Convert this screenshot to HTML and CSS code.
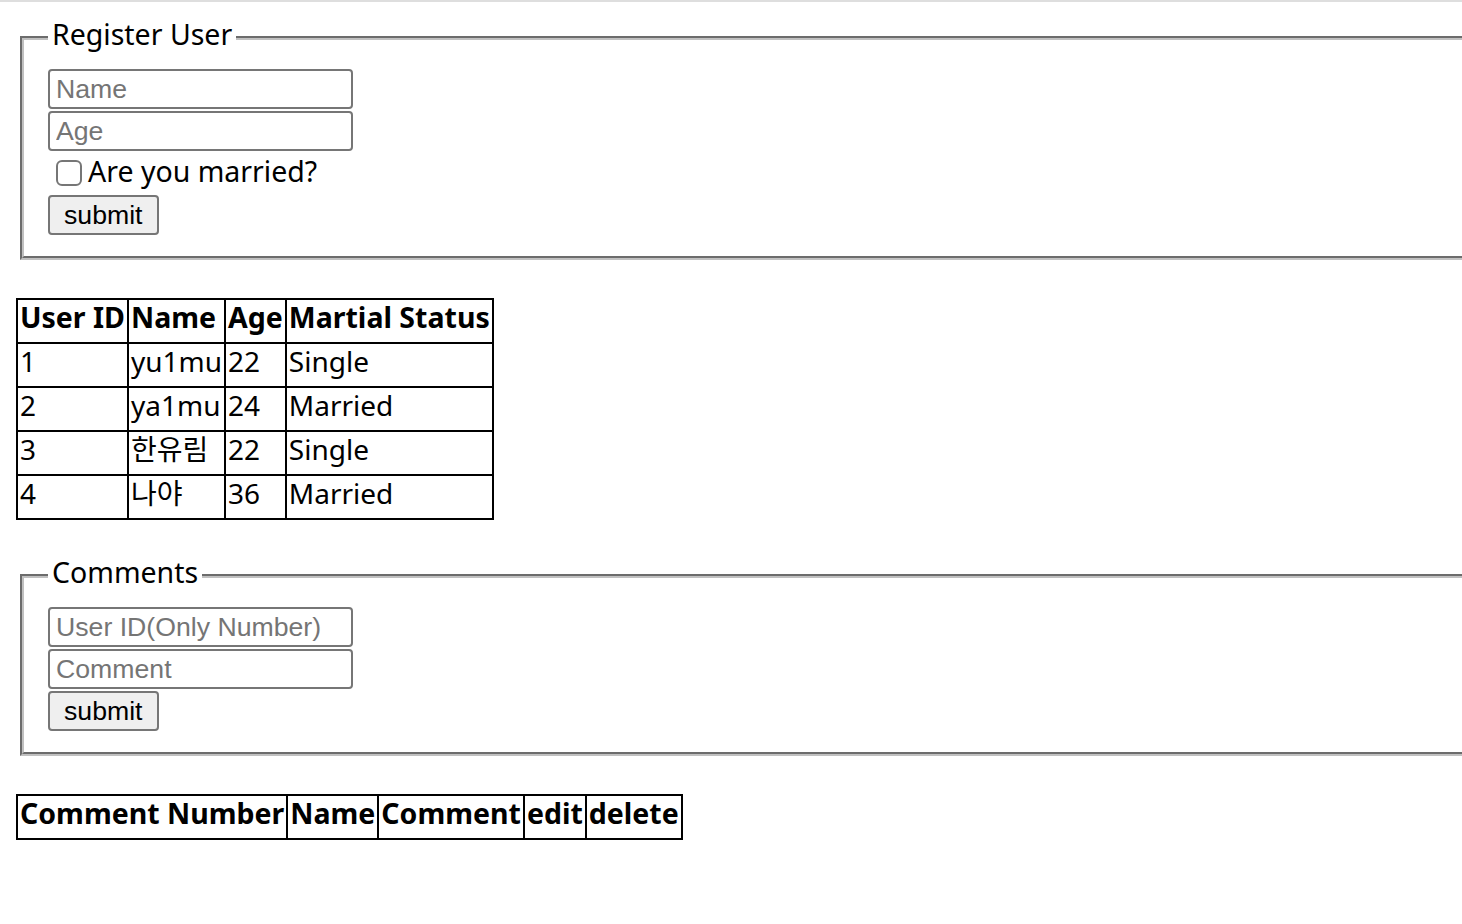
FILE: index.html
```html
<!DOCTYPE html>
<html lang="ko">
<head>
<meta charset="utf-8">
<title>Users</title>
<link rel="stylesheet" href="styles.css">
</head>
<body>
<form class="panel" id="user-form">
  <fieldset class="box">
    <legend class="box-title">Register User</legend>
    <div class="box-body">
      <input class="field" type="text" placeholder="Name">
      <input class="field field-next" type="text" placeholder="Age">
      <label class="check-row"><input class="check" type="checkbox"><span class="check-text">Are you married?</span></label>
      <button class="btn" type="submit">submit</button>
    </div>
  </fieldset>
</form>

<table class="grid grid-users">
  <thead>
    <tr><th>User ID</th><th>Name</th><th>Age</th><th>Martial Status</th></tr>
  </thead>
  <tbody>
    <tr><td>1</td><td>yu1mu</td><td>22</td><td>Single</td></tr>
    <tr><td>2</td><td>ya1mu</td><td>24</td><td>Married</td></tr>
    <tr><td>3</td><td>한유림</td><td>22</td><td>Single</td></tr>
    <tr><td>4</td><td>나야</td><td>36</td><td>Married</td></tr>
  </tbody>
</table>

<form class="panel panel-comments" id="comment-form">
  <fieldset class="box">
    <legend class="box-title">Comments</legend>
    <div class="box-body">
      <input class="field" type="text" placeholder="User ID(Only Number)">
      <input class="field field-next" type="text" placeholder="Comment">
      <button class="btn btn-comment" type="submit">submit</button>
    </div>
  </fieldset>
</form>

<table class="grid grid-comments">
  <thead>
    <tr><th>Comment Number</th><th>Name</th><th>Comment</th><th>edit</th><th>delete</th></tr>
  </thead>
  <tbody></tbody>
</table>
</body>
</html>
```

FILE: styles.css
```css
html {
  overflow: hidden;
  margin: 0;
}

body {
  margin: 0;
  padding: 17px 16px 16px;
  border-top: 2px solid #dedede;
  font-family: "Noto Sans", "Noto Sans CJK KR", sans-serif;
  font-size: 28.5px;
  line-height: 38px;
  color: #000;
  background: #fff;
}

.panel {
  margin: 0;
}

.panel-comments {
  margin-top: 37px;
}

.box {
  margin: 0 -200px 0 4px;
  padding: 0 24px 21px;
  border: 4px groove rgb(192, 192, 192);
}

.box-title {
  padding: 0 4px 8px;
  line-height: 30px;
}

.box-body {
  display: flex;
  flex-direction: column;
  align-items: flex-start;
  padding-top: 12px;
}

.field {
  box-sizing: border-box;
  width: 305px;
  height: 40px;
  margin: 0;
  padding: 2px 6px;
  border: 2px solid #767676;
  border-radius: 4px;
  font-family: "Liberation Sans", Arial, sans-serif;
  font-size: 26.67px;
  color: #000;
  background: #fff;
}

.field::placeholder {
  color: #757575;
}

.field-next {
  margin-top: 2px;
}

.check-row {
  display: flex;
  align-items: center;
  height: 44px;
}

.check-text {
  padding-bottom: 4px;
}

.check {
  appearance: none;
  -webkit-appearance: none;
  box-sizing: border-box;
  width: 26px;
  height: 26px;
  margin: 0 6px 0 8px;
  border: 2px solid #767676;
  border-radius: 6px;
  background: #fff;
}

.btn {
  box-sizing: border-box;
  height: 40px;
  margin: 0;
  padding: 0 14px;
  border: 2px solid #767676;
  border-radius: 4px;
  background: #efefef;
  font-family: "Liberation Sans", Arial, sans-serif;
  font-size: 26.67px;
  color: #000;
}

.btn-comment {
  margin-top: 2px;
}

.grid {
  border-collapse: collapse;
  border: 2px solid #000;
  margin-top: 38px;
}

.grid th,
.grid td {
  border: 2px solid #000;
  padding: 0 2px 8px;
  text-align: left;
  line-height: 34px;
  white-space: nowrap;
}

.grid td {
  font-size: 28px;
}

.grid th {
  font-weight: 700;
}
```
